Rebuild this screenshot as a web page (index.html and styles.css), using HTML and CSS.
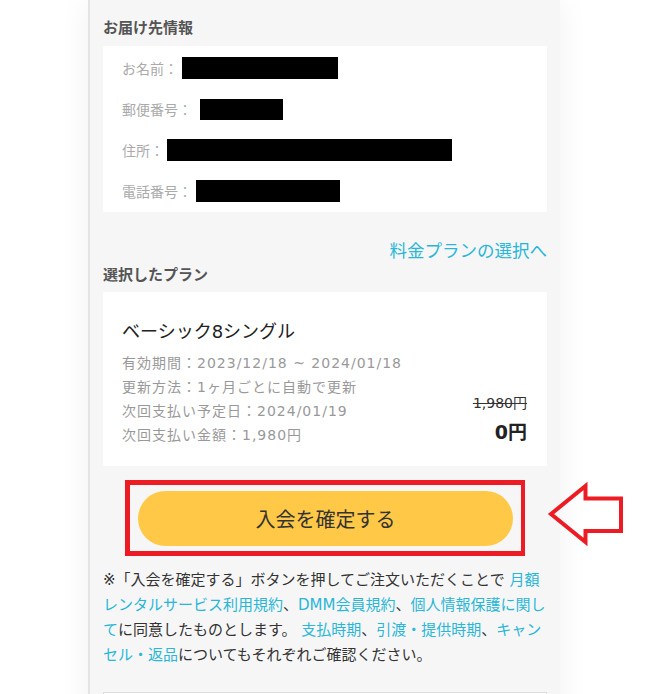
FILE: index.html
```html
<!DOCTYPE html>
<html lang="ja">
<head>
  <meta charset="UTF-8">
  <meta name="viewport" content="width=device-width, initial-scale=1">
  <title>入会確認</title>
  <link rel="stylesheet" href="styles.css">
</head>
<body>
<div class="page">

  <section class="panel">
    <h3 class="section-title">お届け先情報</h3>
    <div class="card address">
      <div class="row"><span class="label">お名前：</span><span class="mask mask-name"></span></div>
      <div class="row"><span class="label">郵便番号：</span><span class="mask mask-zip"></span></div>
      <div class="row"><span class="label">住所：</span><span class="mask mask-addr"></span></div>
      <div class="row"><span class="label">電話番号：</span><span class="mask mask-tel"></span></div>
    </div>

    <div class="plan-link"><a href="#">料金プランの選択へ</a></div>

    <h3 class="section-title plan-heading">選択したプラン</h3>
    <div class="card plan">
      <p class="plan-name">ベーシック8シングル</p>
      <div class="plan-body">
        <ul class="plan-info">
          <li>有効期間：2023/12/18 ~ 2024/01/18</li>
          <li>更新方法：1ヶ月ごとに自動で更新</li>
          <li>次回支払い予定日：2024/01/19</li>
          <li>次回支払い金額：1,980円</li>
        </ul>
        <div class="price">
          <div class="price-old">1,980円</div>
          <div class="price-now">0円</div>
        </div>
      </div>
    </div>

    <div class="confirm-mark">
      <button class="confirm-btn">入会を確定する</button>
    </div>

    <p class="notice">※「入会を確定する」ボタンを押してご注文いただくことで <a href="#">月額レンタルサービス利用規約</a>、<a href="#">DMM会員規約</a>、<a href="#">個人情報保護に関して</a>に同意したものとします。 <a href="#">支払時期</a>、<a href="#">引渡・提供時期</a>、<a href="#">キャンセル・返品</a>についてもそれぞれご確認ください。</p>

    <div class="card next-box"></div>
  </section>

  <!-- 注釈の矢印 -->
  <svg class="mark-arrow" width="80" height="70" viewBox="0 0 80 70">
    <polygon points="6,34 40.5,6 40.5,18.5 76,18.5 76,51 40.5,51 40.5,62" fill="none" stroke="#ed1c24" stroke-width="4"/>
  </svg>

</div>
</body>
</html>
```

FILE: styles.css
```css
body {
  margin: 0;
  background: #fff;
  font-family: "DejaVu Sans", "Noto Sans CJK JP", sans-serif;
  color: #333;
}
a {
  color: #29b6d8;
  text-decoration: none;
}
.page {
  position: relative;
  height: 694px;
  overflow: hidden;
}
.panel {
  margin-left: 88px;
  width: 444px;
  padding: 0 13px;
  background: #f6f6f6;
  border-left: 2px solid #e4e4e4;
  box-shadow: 0 0 30px rgba(0, 0, 0, 0.06);
  min-height: 800px;
}
.section-title {
  margin: 0 0 8px;
  padding-top: 18px;
  font-size: 15px;
  line-height: 20px;
  font-weight: bold;
  color: #555;
}
.plan-heading {
  padding-top: 2px;
  margin-bottom: 7px;
}
.card {
  background: #fff;
}
.address {
  padding: 11px 18px 10px 19px;
  display: flex;
  flex-direction: column;
  gap: 19px;
}
.row {
  display: flex;
  align-items: center;
  height: 22px;
}
.label {
  font-size: 14px;
  color: #aaa;
}
.mask {
  display: inline-block;
  height: 22px;
  background: #000;
}
.mask-name { width: 156px; margin-left: 4px; }
.mask-zip { width: 83px; height: 21px; margin-left: 8px; }
.mask-addr { width: 285px; margin-left: 3px; }
.mask-tel { width: 144px; margin-left: 4px; }

.plan-link {
  margin-top: 27px;
  text-align: right;
  font-size: 17.5px;
  line-height: 24px;
}
.plan {
  padding: 27px 20px 19px 19px;
}
.plan-name {
  margin: 0 0 6px;
  font-size: 18px;
  line-height: 26px;
  color: #222;
}
.plan-body {
  display: flex;
  justify-content: space-between;
  align-items: flex-end;
}
.plan-info {
  list-style: none;
  margin: 0;
  padding: 0;
  font-size: 14px;
  line-height: 24px;
  letter-spacing: 1px;
  color: #999;
}
.price {
  text-align: right;
  padding-bottom: 1px;
}
.price-old {
  font-size: 14px;
  line-height: 20px;
  margin-bottom: 5px;
  color: #333;
  text-decoration: line-through;
}
.price-now {
  font-size: 19px;
  line-height: 28px;
  font-weight: bold;
  color: #222;
}
.confirm-mark {
  box-sizing: border-box;
  width: 400px;
  height: 76px;
  margin: 14px auto 0;
  padding: 6px 8px 5px;
  border: 5px solid #ed1c24;
  border-right-width: 4px;
}
.confirm-btn {
  display: block;
  width: 100%;
  height: 55px;
  border: none;
  border-radius: 28px;
  background: #ffc846;
  font-family: inherit;
  font-size: 20px;
  color: #333;
  cursor: pointer;
}
.notice {
  margin: 11.5px -4px 0 0;
  font-size: 15px;
  line-height: 25px;
  color: #333;
}
.next-box {
  margin-top: 24.5px;
  height: 80px;
  border: 1px solid #ddd;
}
.mark-arrow {
  position: absolute;
  left: 545px;
  top: 480px;
}
```
